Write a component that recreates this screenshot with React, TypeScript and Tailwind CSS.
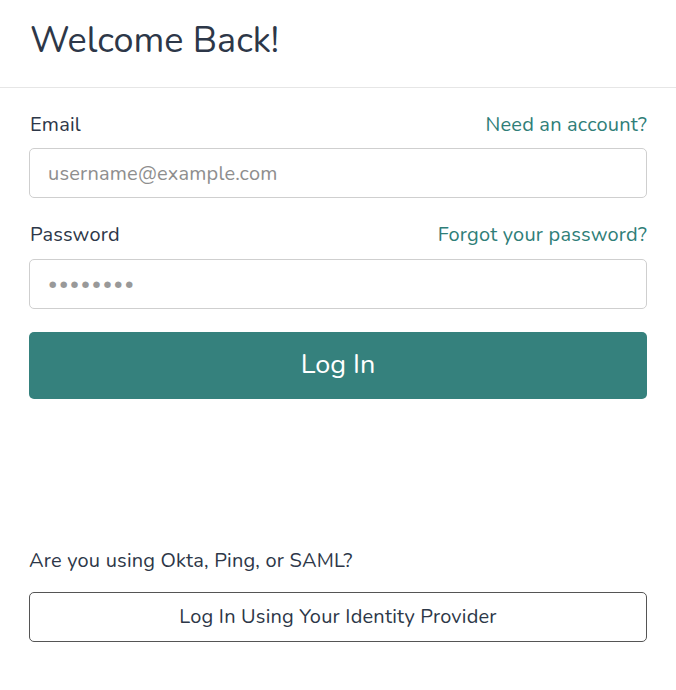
export default function App() {
  return (
    <div className="min-h-screen bg-white text-[#2d3748]" style={{ fontFamily: 'Nunito, "Noto Sans", sans-serif' }}>
      <div className="h-[88px] border-b border-[#e6e6e6] px-[30px] flex items-center">
        <h1 className="text-[36px] leading-none pb-[6px]">Welcome Back!</h1>
      </div>
      <div className="px-[29px] pt-[24px]">
        <div className="flex items-baseline justify-between text-[20px] leading-[26px] tracking-[0.2px]">
          <label className="pl-[1px]">Email</label>
          <a className="text-[#2f7e78]">Need an account?</a>
        </div>
        <input
          className="mt-[10px] w-full h-[50px] rounded-[5px] border border-[#cfcfcf] px-[18px] text-[20px] tracking-[0.2px] placeholder:text-[#8e8e8e] outline-none"
          placeholder="username@example.com"
        />
        <div className="mt-[24px] flex items-baseline justify-between text-[20px] leading-[26px] tracking-[0.2px]">
          <label className="pl-[1px]">Password</label>
          <a className="text-[#2f7e78]">Forgot your password?</a>
        </div>
        <input
          type="password"
          className="mt-[11px] w-full h-[50px] rounded-[5px] border border-[#cfcfcf] px-[18px] text-[18px] text-[#999] tracking-[1.5px] outline-none"
          defaultValue="password"
        />
        <button className="mt-[23px] w-full h-[67px] rounded-[5px] bg-[#35817d] text-white text-[27px]">
          Log In
        </button>
        <p className="mt-[149px] text-[20px] leading-[26px] tracking-[0.2px]">Are you using Okta, Ping, or SAML?</p>
        <button className="mt-[18px] w-full h-[50px] rounded-[5px] border border-[#555] text-[20px] tracking-[0.2px]">
          Log In Using Your Identity Provider
        </button>
      </div>
    </div>
  );
}
